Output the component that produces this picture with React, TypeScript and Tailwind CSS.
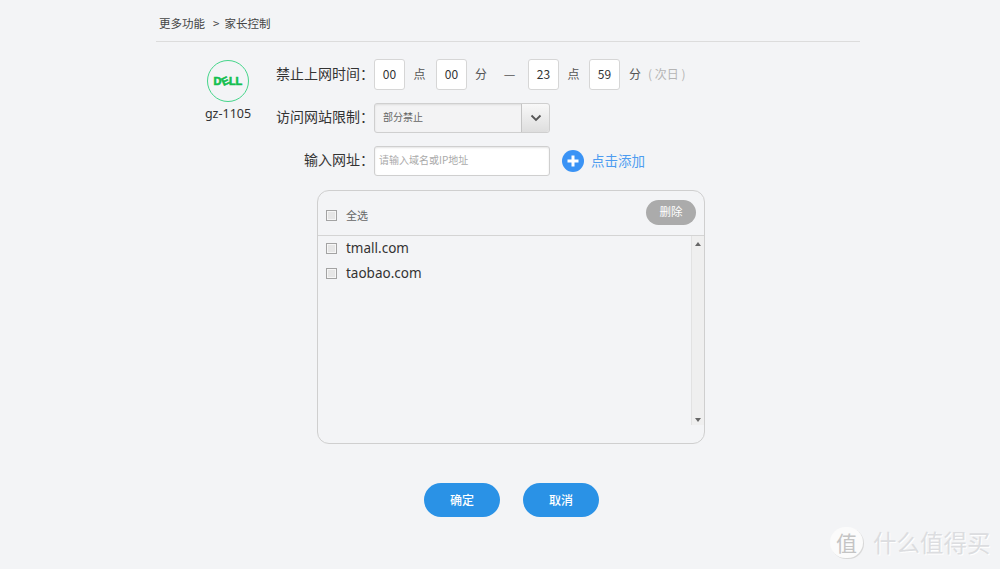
const cjk = { fontFamily: '"Noto Sans CJK SC", "Noto Sans", sans-serif' };

function TimeBox({ value }: { value: string }) {
  return (
    <div className="w-[31px] h-[31px] pb-[2px] flex items-center justify-center bg-white border border-[#d6d6d6] rounded-[3px] text-[12px] text-[#333]">
      {value}
    </div>
  );
}

function Check() {
  return (
    <span className="block w-[11px] h-[11px] border border-[#a3a3a3] bg-[#e6e6e6] shadow-[inset_0_0_0_1px_#f6f6f6]"></span>
  );
}

function Row({ label, children }: { label: string; children: React.ReactNode }) {
  return (
    <div className="flex items-center">
      <div className="w-[103px] pb-[3px] text-right text-[14px] text-[#333] whitespace-nowrap">{label}：</div>
      {children}
    </div>
  );
}

const logoLetter = {
  fontSize: 11,
  fontWeight: 900,
  fill: "#14bf50",
  stroke: "#14bf50",
  strokeWidth: 0.6,
  fontFamily: "Liberation Sans",
};

export default function App() {
  return (
    <div className="relative h-[569px] w-[1000px] overflow-hidden bg-[#f3f4f6]" style={cjk}>
      <div className="ml-[156px] w-[704px]">
        <div className="h-[42px] border-b border-[#dcdcdc] pl-[3px] pt-[15px] text-[11.5px] leading-[17px] text-[#444]">
          更多功能<span className="ml-[8px] mr-[5px]">&gt;</span>家长控制
        </div>

        <div className="flex">
          {/* device */}
          <div className="w-[115px] pt-[18px] pl-[35px] shrink-0">
            <div className="w-[42px] h-[42px] ml-[16px] rounded-full border-[1.5px] border-[#45d58a] flex items-center justify-center">
              <svg width="30" height="12" viewBox="0 0 30 12">
                <text x="0.5" y="10" {...logoLetter}>D</text>
                <text x="8.5" y="10" {...logoLetter} transform="rotate(-25 12 6)">E</text>
                <text x="16" y="10" {...logoLetter}>L</text>
                <text x="22.5" y="10" {...logoLetter}>L</text>
              </svg>
            </div>
            <div className="mt-[3px] w-[74px] text-center text-[12.5px] leading-[18px] text-[#333]" style={{ fontFamily: '"Noto Sans", sans-serif' }}>
              gz-1105
            </div>
          </div>

          <div className="flex-1 pt-[17px]">
            <div className="flex flex-col">
              <Row label="禁止上网时间">
                <TimeBox value="00" />
                <span className="w-[29px] mr-[2px] pb-[2px] text-center text-[12px] text-[#555]">点</span>
                <TimeBox value="00" />
                <span className="w-[28px] pb-[2px] text-center text-[12px] text-[#555]">分</span>
                <span className="w-[33px] pr-[4px] pb-[2px] text-center text-[13px] text-[#555]">—</span>
                <TimeBox value="23" />
                <span className="w-[29px] mr-[1px] pb-[2px] text-center text-[12px] text-[#555]">点</span>
                <TimeBox value="59" />
                <span className="ml-[9px] pb-[2px] text-[12px] text-[#555]">分</span>
                <span className="ml-[7px] pb-[2px] text-[12px] text-[#b5b5b5]">( 次日 )</span>
              </Row>
              <div className="mt-[13px]">
                <Row label="访问网站限制">
                  <div className="flex h-[30px] w-[176px] rounded-[3px] border border-[#cfcfcf] bg-[#f3f3f4] shadow-[inset_0_1px_2px_#ddd]">
                    <div className="flex-1 pl-[8px] text-[10px] leading-[26px] text-[#666]">部分禁止</div>
                    <div className="w-[28px] flex items-center justify-center border-l border-[#c4c4c4] bg-gradient-to-b from-[#f8f8f8] to-[#dedede] rounded-r-[3px]">
                      <svg width="12" height="8" viewBox="0 0 12 8" fill="none">
                        <path d="M1.5 1.5 L6 6 L10.5 1.5" stroke="#555" strokeWidth="1.8" />
                      </svg>
                    </div>
                  </div>
                </Row>
              </div>
              <div className="mt-[13px]">
                <Row label="输入网址">
                  <div className="h-[30px] w-[176px] rounded-[3px] border border-[#cfcfcf] bg-white pl-[4px] text-[10px] leading-[26px] text-[#aaa] shadow-[inset_0_1px_2px_#e4e4e4]">
                    请输入域名或IP地址
                  </div>
                  <div className="ml-[12px] w-[22px] h-[22px] rounded-full bg-[#3a93f5] flex items-center justify-center">
                    <svg width="14" height="14" viewBox="0 0 14 14">
                      <path d="M7 1.5 V12.5 M1.5 7 H12.5" stroke="#fff" strokeWidth="3" />
                    </svg>
                  </div>
                  <span className="ml-[7px] pb-[2px] text-[13.5px] text-[#4d9cf0]">点击添加</span>
                </Row>
              </div>
            </div>

            {/* site list */}
            <div className="ml-[46px] mt-[14px] h-[254px] w-[388px] rounded-[12px] border border-[#cfcfcf] flex flex-col overflow-hidden">
              <div className="h-[45px] shrink-0 border-b border-[#d4d4d4] flex items-center justify-between pl-[8px] pr-[8px]">
                <div className="flex items-center gap-[9px] pt-[4px]">
                  <Check />
                  <span className="text-[11px] text-[#666]">全选</span>
                </div>
                <div className="w-[50px] h-[25px] rounded-full bg-[#ababab] flex items-center justify-center text-[11.5px] text-white mb-[2px]">
                  删除
                </div>
              </div>
              <div className="flex flex-1 min-h-0">
                <div className="flex-1 pl-[8px]">
                  {["tmall.com", "taobao.com"].map((site) => (
                    <div key={site} className="h-[25px] flex items-center gap-[9px]">
                      <Check />
                      <span className="pb-[1px] text-[13.5px] text-[#333]" style={{ fontFamily: '"Noto Sans", sans-serif' }}>
                        {site}
                      </span>
                    </div>
                  ))}
                </div>
                <div className="w-[13px] h-[189px] border-l border-[#e2e2e2] bg-[#efefef] flex flex-col items-center justify-between pt-[6px] pb-[3px]">
                  <span className="block w-0 h-0 border-x-[3px] border-x-transparent border-b-[4px] border-b-[#666]"></span>
                  <span className="block w-0 h-0 border-x-[3px] border-x-transparent border-t-[4px] border-t-[#666]"></span>
                </div>
              </div>
            </div>

            <div className="mt-[39px] ml-[153px] flex gap-[23px]">
              <div className="w-[76px] h-[34px] rounded-full bg-[#2a92e6] flex items-center justify-center text-[12px] font-medium text-white">确定</div>
              <div className="w-[76px] h-[34px] rounded-full bg-[#2a92e6] flex items-center justify-center text-[12px] font-medium text-white">取消</div>
            </div>
          </div>
        </div>
      </div>

      {/* watermark */}
      <div className="absolute left-[830px] top-[526px] flex items-center">
        <div className="w-[33px] h-[31px] rounded-full bg-[#fbfbfb] shadow-[1px_1px_0_#d8d8d8] flex items-center justify-center text-[21px] leading-none text-[#c4c4c4]">值</div>
        <span className="ml-[10px] text-[23.5px] leading-[32px] text-[#dcdde0] [text-shadow:1px_1px_0_#fff]">什么值得买</span>
      </div>
    </div>
  );
}
